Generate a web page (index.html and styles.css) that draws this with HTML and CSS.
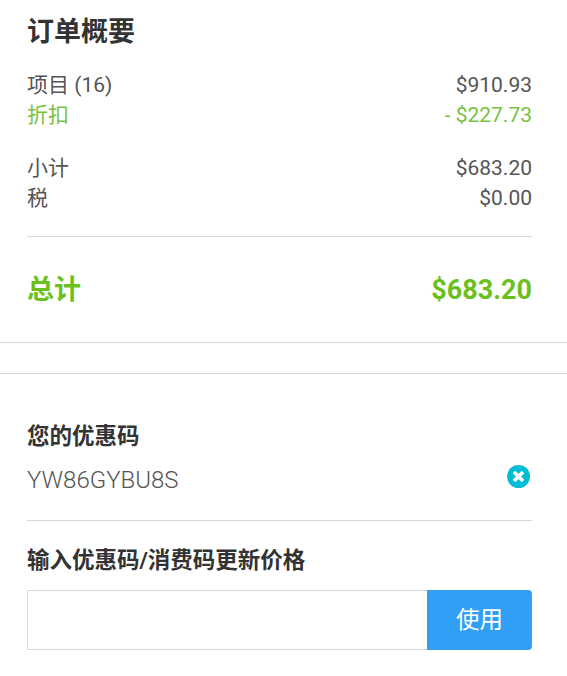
FILE: index.html
```html
<!DOCTYPE html>
<html lang="zh-CN">
<head>
<meta charset="utf-8">
<title>订单概要</title>
<link rel="stylesheet" href="styles.css">
</head>
<body>
<section class="summary">
  <h2 class="title">订单概要</h2>
  <div class="group">
    <div class="row"><span>项目 (16)</span><span>$910.93</span></div>
    <div class="row discount"><span>折扣</span><span>- $227.73</span></div>
  </div>
  <div class="group second">
    <div class="row"><span>小计</span><span>$683.20</span></div>
    <div class="row"><span>税</span><span>$0.00</span></div>
  </div>
  <div class="total"><span>总计</span><span>$683.20</span></div>
</section>
<div class="band"></div>
<section class="coupon">
  <h3 class="label">您的优惠码</h3>
  <div class="applied">
    <span class="code">YW86GYBU8S</span>
    <svg class="remove" viewBox="0 0 24 24" width="23" height="23" aria-label="移除">
      <circle cx="12" cy="12" r="12" fill="#00bcd4"/>
      <path d="M7.3 7.3L16.7 16.7M16.7 7.3L7.3 16.7" stroke="#fff" stroke-width="4" fill="none"/>
    </svg>
  </div>
  <h3 class="label enter">输入优惠码/消费码更新价格</h3>
  <form class="entry">
    <input class="input" type="text">
    <button class="apply" type="button">使用</button>
  </form>
</section>
</body>
</html>
```
FILE: styles.css
```css
* { box-sizing: border-box; }
html, body { margin: 0; padding: 0; background: #fff; }
body {
  width: 567px;
  height: 676px;
  overflow: hidden;
  font-family: Roboto, "Noto Sans CJK SC", sans-serif;
  color: #555;
}
.summary { padding: 12px 35px 0 27px; height: 342px; }
.title {
  margin: 0;
  font-size: 27px;
  line-height: 40px;
  font-weight: 700;
  color: #333;
}
.group { margin-top: 18px; }
.group.second { margin-top: 23px; }
.row {
  display: flex;
  justify-content: space-between;
  font-size: 21px;
  line-height: 30px;
}
.discount { color: #7ac142; }
.total {
  display: flex;
  justify-content: space-between;
  align-items: center;
  margin-top: 23px;
  padding-top: 31px;
  border-top: 1px solid #d8d8d8;
  font-size: 27px;
  line-height: 44px;
  font-weight: 700;
  color: #6cc01e;
}
.band {
  height: 32px;
  border-top: 1px solid #d8d8d8;
  border-bottom: 1px solid #d8d8d8;
}
.coupon { padding: 44px 35px 0 27px; }
.label {
  margin: 0;
  font-size: 22.5px;
  line-height: 36px;
  font-weight: 700;
  color: #333;
}
.applied {
  display: flex;
  justify-content: space-between;
  align-items: flex-start;
  height: 67px;
  padding: 9px 2px 0 0;
  border-bottom: 1px solid #d8d8d8;
}
.code { font-size: 24px; line-height: 34px; font-weight: 300; color: #555; }
.remove { margin-top: 2px; }
.enter { margin-top: 21px; }
.entry { display: flex; margin-top: 12px; height: 60px; }
.input {
  flex: 1;
  min-width: 0;
  height: 60px;
  border: 1px solid #d8d8d8;
  border-right: 0;
  background: #fff;
  outline: 0;
}
.apply {
  width: 105px;
  height: 60px;
  padding: 0 0 5px;
  border: 0;
  border-radius: 0 4px 4px 0;
  background: #309ff5;
  color: #fff;
  font-family: inherit;
  font-size: 23.5px;
}
```
